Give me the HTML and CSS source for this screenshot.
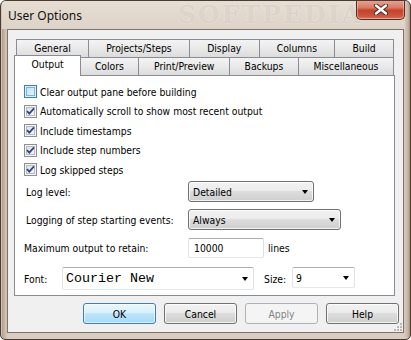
FILE: index.html
```html
<!DOCTYPE html>
<html>
<head>
<meta charset="utf-8">
<link rel="stylesheet" href="styles.css">
</head>
<body>
<div class="window">
  <div class="titlebar">
    <span class="title">User Options</span>
    <span class="wm-title">SOFTPEDIA</span>
    <div class="close">
      <svg width="16" height="11" viewBox="0 0 16 11"><path d="M3 1.5 L13 9.5 M13 1.5 L3 9.5" stroke="#3a2a2a" stroke-width="4.2" stroke-linecap="round"/><path d="M3 1.5 L13 9.5 M13 1.5 L3 9.5" stroke="#ffffff" stroke-width="2.4" stroke-linecap="round"/></svg>
    </div>
  </div>
  <div class="client">
    <div class="tabctl">
      <div class="tabrow">
        <div class="tab">General</div>
        <div class="tab">Projects/Steps</div>
        <div class="tab">Display</div>
        <div class="tab">Columns</div>
        <div class="tab">Build</div>
      </div>
      <div class="tabrow">
        <div class="tab sel">Output</div>
        <div class="tab">Colors</div>
        <div class="tab">Print/Preview</div>
        <div class="tab">Backups</div>
        <div class="tab">Miscellaneous</div>
      </div>
      <div class="panel">
        <div class="checks">
          <div class="chk"><span class="box hot"></span><span>Clear output pane before building</span></div>
          <div class="chk"><span class="box"><svg width="11" height="11" viewBox="0 0 11 11"><path d="M2 5.2 L4.3 7.6 L9 2.3" fill="none" stroke="#2e4a85" stroke-width="1.8"/></svg></span><span>Automatically scroll to show most recent output</span></div>
          <div class="chk"><span class="box"><svg width="11" height="11" viewBox="0 0 11 11"><path d="M2 5.2 L4.3 7.6 L9 2.3" fill="none" stroke="#2e4a85" stroke-width="1.8"/></svg></span><span>Include timestamps</span></div>
          <div class="chk"><span class="box"><svg width="11" height="11" viewBox="0 0 11 11"><path d="M2 5.2 L4.3 7.6 L9 2.3" fill="none" stroke="#2e4a85" stroke-width="1.8"/></svg></span><span>Include step numbers</span></div>
          <div class="chk"><span class="box"><svg width="11" height="11" viewBox="0 0 11 11"><path d="M2 5.2 L4.3 7.6 L9 2.3" fill="none" stroke="#2e4a85" stroke-width="1.8"/></svg></span><span>Log skipped steps</span></div>
        </div>
        <div class="frow r1">
          <span class="lbl ind">Log level:</span>
          <div class="drop w-detailed"><span>Detailed</span><span class="arrow"></span></div>
        </div>
        <div class="frow r2">
          <span class="lbl ind">Logging of step starting events:</span>
          <div class="drop w-always"><span>Always</span><span class="arrow"></span></div>
        </div>
        <div class="frow r3">
          <span class="lbl">Maximum output to retain:</span>
          <div class="edit"><span>10000</span></div>
          <span class="unit">lines</span>
        </div>
        <div class="frow r4">
          <span class="lbl font-lbl">Font:</span>
          <div class="combo font-combo"><span class="mono">Courier New</span><span class="arrow"></span></div>
          <span class="lbl size-lbl">Size:</span>
          <div class="combo size-combo"><span>9</span><span class="arrow"></span></div>
        </div>
      </div>
    </div>
    <div class="buttons">
      <div class="btn default">OK</div>
      <div class="btn">Cancel</div>
      <div class="btn disabled">Apply</div>
      <div class="btn">Help</div>
    </div>
    <svg class="grip" width="8" height="8" viewBox="0 0 8 8">
      <g fill="#b8b8b8"><rect x="6" y="0" width="2" height="2"/><rect x="3" y="3" width="2" height="2"/><rect x="6" y="3" width="2" height="2"/><rect x="0" y="6" width="2" height="2"/><rect x="3" y="6" width="2" height="2"/><rect x="6" y="6" width="2" height="2"/></g>
    </svg>
  </div>
</div>
</body>
</html>
```

FILE: styles.css
```css
* { box-sizing: border-box; }
html, body { margin: 0; padding: 0; background: #ffffff; }
body {
  font-family: "DejaVu Sans Condensed", "Liberation Sans", sans-serif;
  font-size: 10.3px;
  color: #000;
}
.window {
  width: 411px;
  height: 340px;
  border: 1px solid #4a3c33;
  border-radius: 6px 6px 5px 5px;
  background: linear-gradient(to right, #a88e7b 0, #c6b3a3 3px, #d9cdc1 7px, #d9cdc1 403px, #c6b3a3 407px, #a88e7b 100%);
  box-shadow: inset 1px 1px 0 rgba(255,255,255,0.45);
  padding: 0 6px 6px 6px;
  display: flex;
  flex-direction: column;
  position: relative;
  overflow: hidden;
}
.titlebar {
  height: 28px;
  display: flex;
  align-items: flex-start;
  margin: 0 -1px 0 -5px;
  padding-left: 6px;
  background: linear-gradient(#e6ddd3, #ddd3c8);
  position: relative;
}
.title {
  font-family: "Noto Sans", "Open Sans", sans-serif;
  font-size: 12px;
  line-height: 16px;
  margin-top: 7px;
  flex: 1;
  color: #111;
}
.wm-title {
  position: absolute;
  left: 176px;
  top: 1px;
  line-height: 26px;
  font-family: "DejaVu Serif", serif;
  font-weight: bold;
  font-size: 25px;
  letter-spacing: 2px;
  color: rgba(205,192,180,0.55);
  text-shadow: 0 0 2px rgba(255,255,255,0.5);
}
.close {
  width: 49px;
  height: 20px;
  margin-top: -1px;
  border: 1px solid #5a2a20;
  border-top: none;
  border-radius: 0 0 5px 5px;
  background: linear-gradient(#e9a897 0%, #d77a63 40%, #c4432a 55%, #c9573c 85%, #d97a60 100%);
  box-shadow: inset 0 0 0 1px rgba(255,220,210,0.45);
  display: flex;
  align-items: center;
  justify-content: center;
  position: relative;
  z-index: 1;
}
.client {
  flex: 1;
  background: #f0f0f0;
  border: 1px solid #7b726a;
  padding: 9px 6px 7px 6px;
  display: flex;
  flex-direction: column;
  position: relative;
}
.tabctl {
  display: flex;
  flex-direction: column;
  width: 381px;
}
.tabrow {
  display: flex;
  height: 18px;
  margin: 0 1px 0 2px;
}
.tab {
  flex: 1 1 auto;
  height: 18px;
  border: 1px solid #898c95;
  border-bottom: none;
  margin-left: -1px;
  background: linear-gradient(#f3f3f3, #e9e9e9 50%, #dcdcdc 100%);
  text-align: center;
  line-height: 17px;
  padding: 0 4px;
  white-space: nowrap;
}
.tab:first-child { margin-left: 0; }
.tab.sel {
  background: #ffffff;
  margin: -2px -2px -1px -2px;
  height: 21px;
  padding: 0 6px;
  line-height: 16px;
  position: relative;
  z-index: 2;
}
.tab.sel + .tab { margin-left: 0; }
.panel {
  height: 221px;
  border: 1px solid #898c95;
  background: #ffffff;
  padding: 6px 0 0 9px;
  display: flex;
  flex-direction: column;
}
.checks { display: flex; flex-direction: column; }
.chk {
  height: 19.5px;
  display: flex;
  align-items: center;
  gap: 3px;
}
.box {
  width: 13px;
  height: 13px;
  border: 1px solid #8e8f8f;
  background: linear-gradient(135deg, #dcdcdc, #fbfbfb);
  box-shadow: inset 0 0 0 1px #f4f4f4, inset 0 0 0 2px #b8bcc2;
  display: flex;
  align-items: center;
  justify-content: center;
}
.box.hot {
  border-color: #3c7fb1;
  background: linear-gradient(135deg, #b9dcf5, #eef8fe);
  box-shadow: inset 0 0 0 1px #deeffa, inset 0 0 0 2px #7eb4e0;
}
.box svg { display: block; }
.frow {
  display: flex;
  align-items: center;
}
.r1 { margin-top: 1.5px; height: 21px; }
.r2 { margin-top: 7px; height: 21px; }
.r3 { margin-top: 8px; height: 20px; }
.r4 { margin-top: 9px; height: 23px; }
.lbl { width: 164px; flex: none; white-space: nowrap; }
.lbl.ind { padding-left: 2px; }
.drop {
  height: 21px;
  border: 1px solid #707070;
  border-radius: 3px;
  background: linear-gradient(#f2f2f2 0%, #ebebeb 50%, #dddddd 50%, #cfcfcf 100%);
  box-shadow: inset 0 0 0 1px rgba(255,255,255,0.75);
  display: flex;
  align-items: center;
  justify-content: space-between;
  padding: 0 5px 0 4px;
}
.w-detailed { width: 126px; }
.w-always { width: 153px; }
.arrow {
  width: 0;
  height: 0;
  border-left: 3.5px solid transparent;
  border-right: 3.5px solid transparent;
  border-top: 4px solid #000;
  margin-top: 1px;
}
.edit, .combo {
  background: #ffffff;
  border: 1px solid;
  border-color: #abadb3 #dbdfe6 #e3e9ef #e2e3ea;
  border-radius: 2px;
  display: flex;
  align-items: center;
}
.edit {
  width: 76px;
  height: 20px;
  padding-left: 5px;
}
.unit { margin-left: 4px; }
.font-lbl { width: 38px; }
.combo {
  justify-content: space-between;
  padding: 0 5px 0 3px;
}
.font-combo { width: 192px; height: 23px; }
.mono {
  font-family: "Liberation Mono", "Courier New", monospace;
  font-size: 13.33px;
}
.size-lbl { width: 28px; margin-left: 10px; }
.size-combo { width: 63px; height: 21px; align-self: flex-start; }
.buttons {
  display: flex;
  justify-content: flex-end;
  gap: 8px;
  margin-top: 7px;
  margin-right: -8px;
  padding-right: 6px;
}
.btn {
  width: 73px;
  height: 21px;
  border: 1px solid #707070;
  border-radius: 3px;
  background: linear-gradient(#f2f2f2 0%, #ebebeb 50%, #dddddd 50%, #cfcfcf 100%);
  box-shadow: inset 0 0 0 1px rgba(255,255,255,0.75);
  display: flex;
  align-items: center;
  justify-content: center;
}
.btn.default {
  border-color: #3c7fb1;
  background: linear-gradient(#eaf6fd 0%, #d9f0fc 50%, #bee6fd 50%, #a7d9f5 100%);
  box-shadow: inset 0 0 0 1px rgba(255,255,255,0.6);
}
.btn.disabled {
  border-color: #adb2b5;
  background: #f4f4f4;
  color: #838383;
  box-shadow: none;
}
.grip {
  position: absolute;
  right: 1px;
  bottom: 1px;
}
```
